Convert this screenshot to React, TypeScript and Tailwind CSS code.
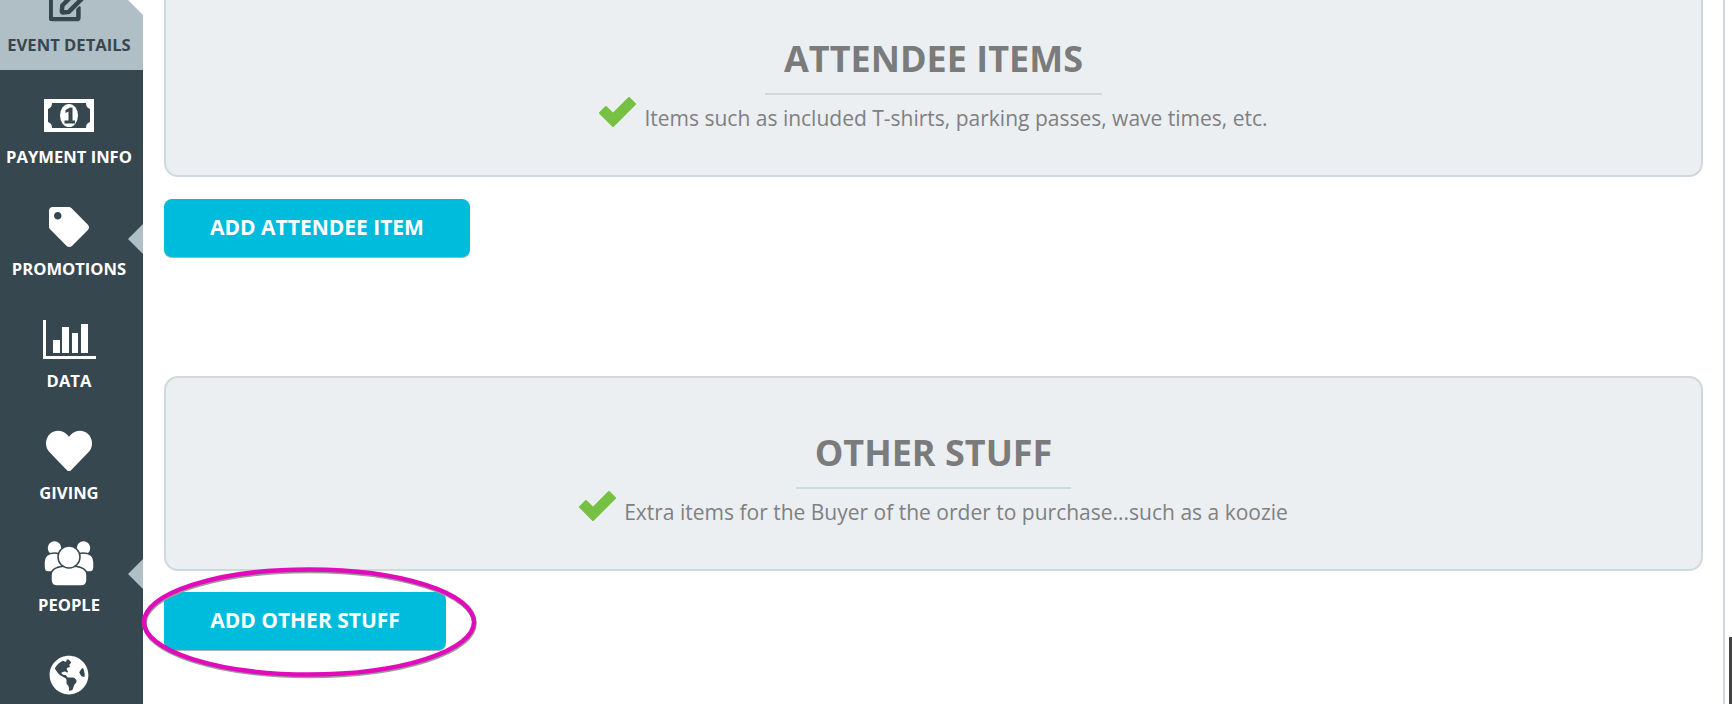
import React from "react";
import { FaRegEdit, FaTag, FaHeart, FaGlobeAmericas } from "react-icons/fa";

const font = { fontFamily: '"Open Sans", sans-serif' };

function Money() {
  return (
    <svg width="50" height="33" viewBox="0 0 50 33">
      <path fill="#fff" fillRule="evenodd" d="M0 0H50V33H0ZM8 4C8 7 7 9 4 10V23C7 24 8 26 8 29H42C42 26 43 24 46 23V10C43 9 42 7 42 4Z" />
      <ellipse cx="25" cy="16.5" rx="9" ry="11.5" fill="#fff" />
      <path fill="#37474f" d="M21.5 11L26 8.5H28.5V21.5H31V24.5H20.5V21.5H24.5V12.5L21.5 14Z" />
    </svg>
  );
}

function Chart() {
  return (
    <svg width="53" height="39" viewBox="0 0 53 39" fill="#fff">
      <rect x="0" y="0" width="3" height="39" />
      <rect x="0" y="36" width="53" height="3" />
      <rect x="10" y="20" width="7" height="13" />
      <rect x="19" y="7" width="7" height="26" />
      <rect x="29" y="13" width="6" height="20" />
      <rect x="38" y="4" width="7" height="29" />
    </svg>
  );
}

function People() {
  return (
    <svg width="50" height="46" viewBox="0 0 50 46" fill="#fff" stroke="#37474f" strokeWidth="1.5">
      <circle cx="10.5" cy="8" r="7.5" />
      <circle cx="39.5" cy="8" r="7.5" />
      <path d="M0 22C0 15 6 13 11 13C17 13 20 18 20 24V32H4C1 32 0 30 0 27Z" />
      <path d="M50 22C50 15 44 13 39 13C33 13 30 18 30 24V32H46C49 32 50 30 50 27Z" />
      <path d="M7 35C7 29 14 26 25 26C36 26 43 29 43 35V40C43 44 41 46 37 46H13C9 46 7 44 7 40Z" />
      <circle cx="25" cy="17" r="11" />
    </svg>
  );
}

function Check() {
  return (
    <svg width="37" height="30" viewBox="0 0 37 30" className="shrink-0 mt-[2px]">
      <path d="M1 16L7 10L14 17L30 1L36 7L14 29Z" fill="#76c043" stroke="#76c043" strokeWidth="2" strokeLinejoin="round" />
    </svg>
  );
}

const items: { label: string; icon: React.ReactNode; active?: boolean }[] = [
  { label: "EVENT DETAILS", icon: <FaRegEdit size={40} color="#37474f" stroke="#37474f" strokeWidth={16} />, active: true },
  { label: "PAYMENT INFO", icon: <Money /> },
  { label: "PROMOTIONS", icon: <FaTag size={40} color="#fff" /> },
  { label: "DATA", icon: <Chart /> },
  { label: "GIVING", icon: <FaHeart size={46} color="#fff" /> },
  { label: "PEOPLE", icon: <People /> },
  { label: "", icon: <FaGlobeAmericas size={40} color="#fff" /> },
];

function SideItem({ label, icon, active }: { label: string; icon: React.ReactNode; active?: boolean }) {
  return (
    <div className={active ? "h-[112px] shrink-0 pr-[5px] bg-[#b0bec5] text-[#37474f]" : "h-[112px] shrink-0 pr-[5px] text-white"}>
      <div className="h-[76px] pt-[14px] flex items-center justify-center">{icon}</div>
      <div className="h-[22px] leading-[22px] text-[16.6px] font-bold text-center whitespace-nowrap">{label}</div>
    </div>
  );
}

function Panel({ title, text }: { title: string; text: string }) {
  return (
    <div className="h-[195px] bg-[#ebeff2] border-2 border-[#cfd8dc] rounded-[14px] flex flex-col items-center pt-[53px]">
      <h2 className="px-[19px] h-[58px] leading-[44px] text-[36px] font-bold text-[#7b7b7b] border-b-2 border-[#cfd8dc] whitespace-nowrap">
        {title}
      </h2>
      <div className="flex items-start gap-[8px] text-[21px] leading-[28px] text-[#808080]">
        <Check />
        <span className="mt-[9px]">{text}</span>
      </div>
    </div>
  );
}

function AddButton({ label, className }: { label: string; className: string }) {
  return (
    <button className={"block h-[59px] bg-[#00bcdc] border-b border-[#a9b5b8] rounded-[8px] text-white text-[21px] font-bold " + className}>
      {label}
    </button>
  );
}

export default function App() {
  return (
    <div className="flex h-[704px] w-[1732px] overflow-hidden bg-white" style={font}>
      <aside className="relative w-[143px] shrink-0 bg-[#37474f] flex flex-col -mt-[42px] h-[746px]">
        {items.map((it, i) => (
          <SideItem key={i} {...it} />
        ))}
        <div className="absolute right-0 top-[27px] w-0 h-0 border-y-[15px] border-y-transparent border-r-[15px] border-r-white" />
        <div className="absolute right-0 top-[266px] w-0 h-0 border-y-[15px] border-y-transparent border-r-[15px] border-r-[#b0bec5]" />
        <div className="absolute right-0 top-[601px] w-0 h-0 border-y-[15px] border-y-transparent border-r-[15px] border-r-[#b0bec5]" />
      </aside>
      <main className="relative flex-1 pl-[21px] pr-[20px] -mt-[18px]">
        <Panel title="ATTENDEE ITEMS" text="Items such as included T-shirts, parking passes, wave times, etc." />
        <AddButton label="ADD ATTENDEE ITEM" className="w-[306px] mt-[22px]" />
        <div className="mt-[118px]">
          <Panel title="OTHER STUFF" text="Extra items for the Buyer of the order to purchase...such as a koozie" />
        </div>
        <AddButton label="ADD OTHER STUFF" className="w-[282px] mt-[21px]" />
        <svg width="344" height="120" viewBox="0 0 344 120" className="absolute left-[-6px] top-[580px] pointer-events-none">
          <ellipse cx="172" cy="60.5" rx="165" ry="52.5" fill="none" stroke="#9a9a9a" strokeWidth="4.5" transform="translate(0.5 1)" />
          <ellipse cx="172" cy="60" rx="165" ry="52.5" fill="none" stroke="#e00cbc" strokeWidth="4.5" />
        </svg>
      </main>
      <div className="w-[2px] shrink-0 bg-[#cfdcdc]" />
      <div className="w-[7px] shrink-0 flex justify-end items-end">
        <div className="w-[3px] h-[67px] bg-[#444444]" />
      </div>
    </div>
  );
}
